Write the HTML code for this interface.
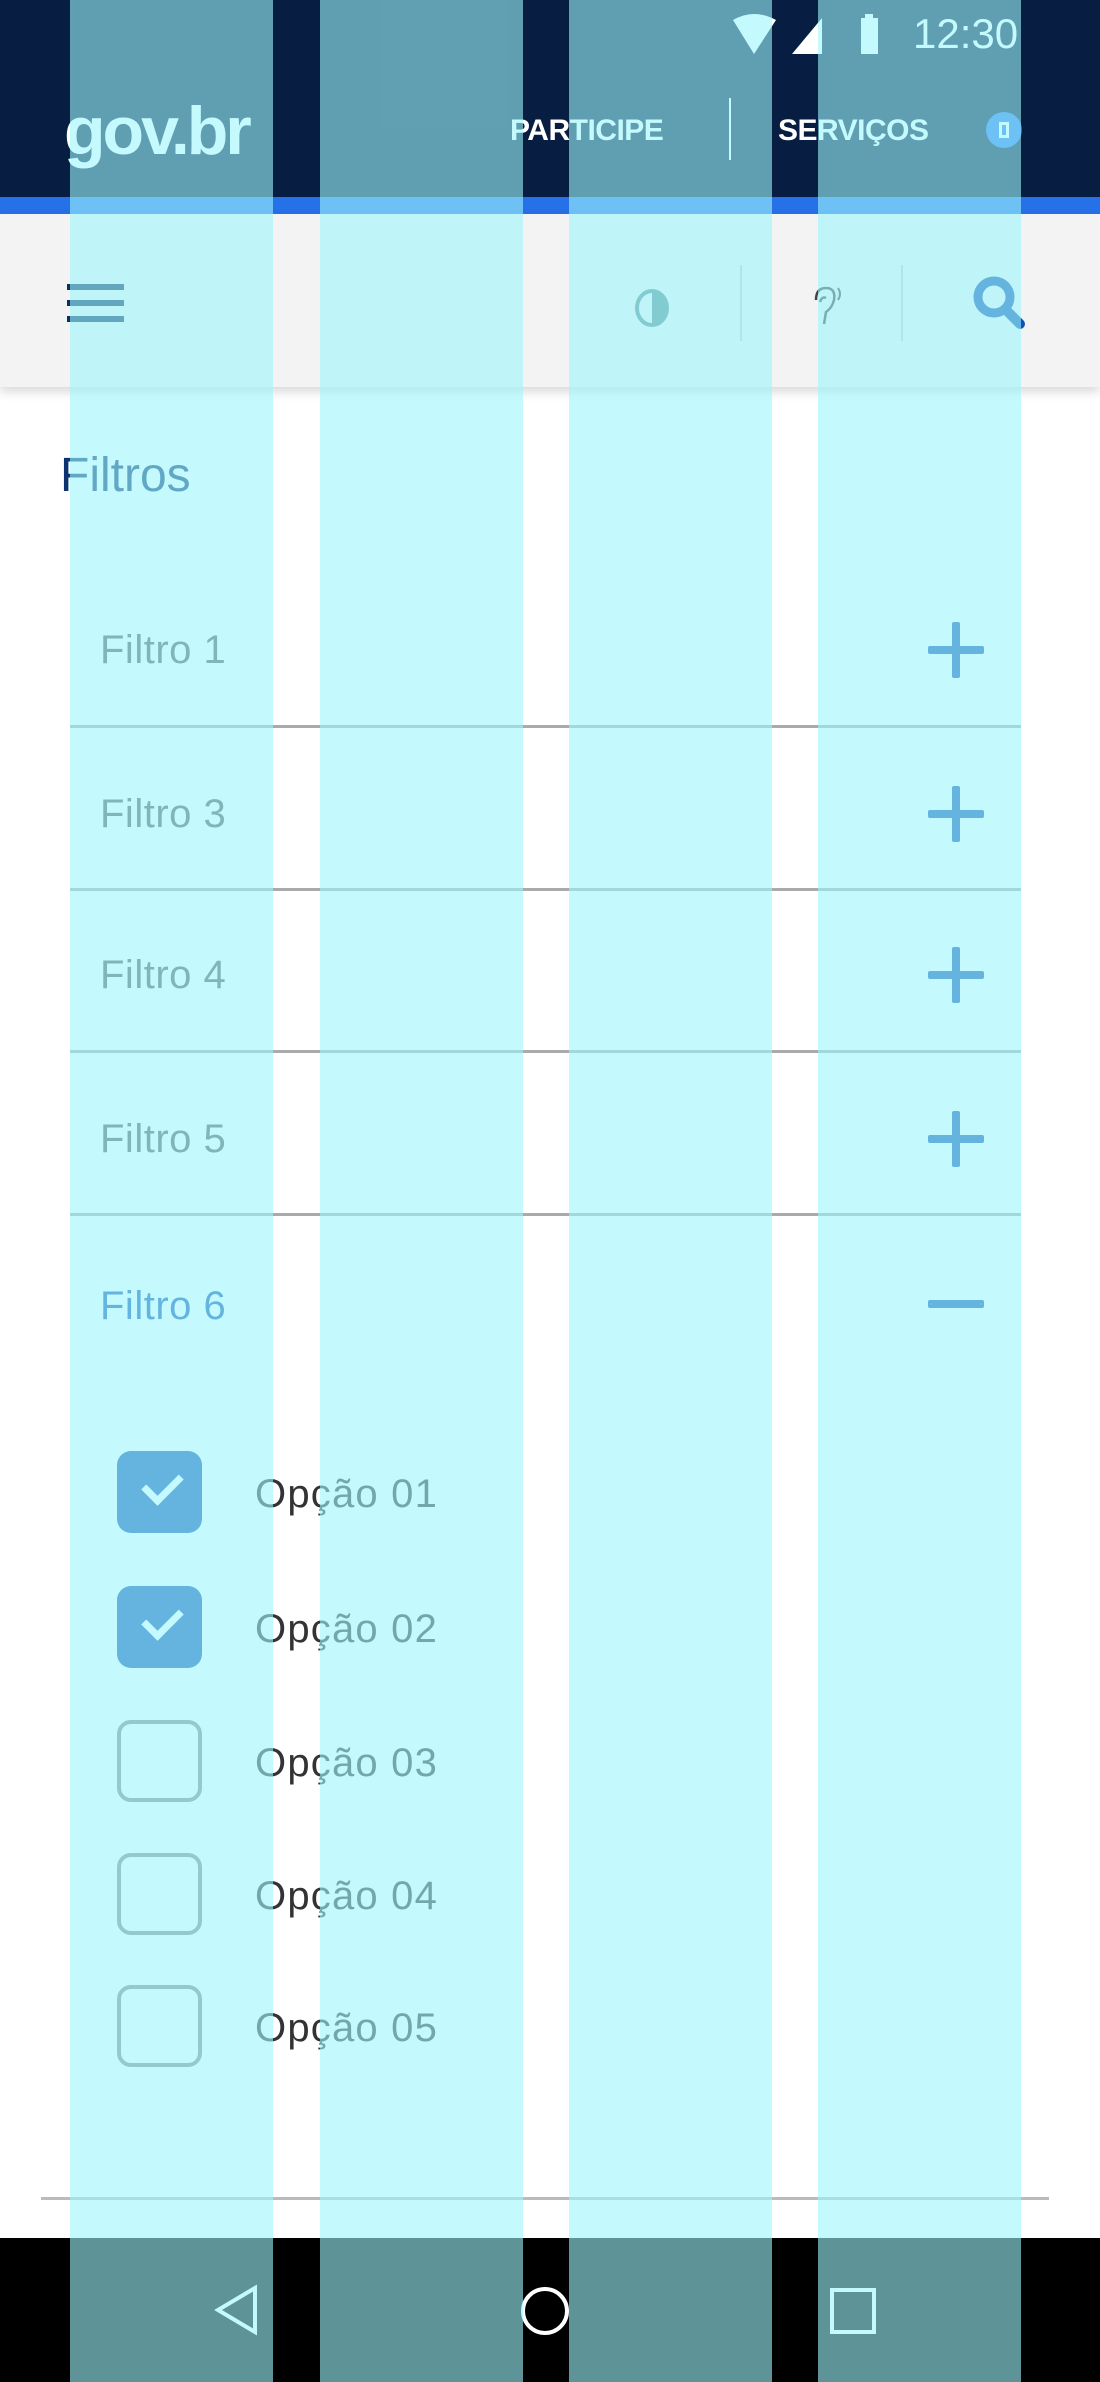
<!DOCTYPE html>
<html><head><meta charset="utf-8"><style>
*{margin:0;padding:0;box-sizing:border-box}
body{width:1100px;height:2382px;position:relative;overflow:hidden;background:#fff;font-family:"Liberation Sans",sans-serif}
.abs{position:absolute}
.col{position:absolute;top:0;height:2382px;width:203px;background:rgba(157,246,254,0.6);z-index:50}
.lbl{position:absolute;left:100px;font-size:40px;color:#555;line-height:1;letter-spacing:0.5px}
.div{position:absolute;left:70px;width:951px;height:3px;background:#aaa}
.plus{position:absolute;left:928px;width:56px;height:56px}
.plus:before{content:"";position:absolute;left:0;top:24px;width:56px;height:8px;background:#1351b4;border-radius:2px}
.plus:after{content:"";position:absolute;left:24px;top:0;width:8px;height:56px;background:#1351b4;border-radius:2px}
.cb{position:absolute;left:117px;width:85px;height:82px;border-radius:14px}
.cb.on{background:#1351b4}
.cb.off{border:4px solid #888}
.cb.on:after{content:"";position:absolute;left:27px;top:22px;width:30px;height:16px;border-left:7px solid #fff;border-bottom:7px solid #fff;transform:rotate(-45deg)}
.opt{position:absolute;left:255px;font-size:40px;color:#333;line-height:1;letter-spacing:1.2px}
</style></head><body>
<div class="col" style="left:70px"></div>
<div class="col" style="left:320px"></div>
<div class="col" style="left:569px"></div>
<div class="col" style="left:818px"></div>

<div class="abs" style="left:0;top:0;width:1100px;height:197px;background:#071d41"></div>
<div class="abs" style="left:0;top:197px;width:1100px;height:17px;background:#2670e8"></div>
<svg class="abs" style="left:730px;top:12px" width="300" height="45">
<path d="M3 8 Q24 -4 46 8 L24 42 Z" fill="#fff"/>
<path d="M62 42 L92 6 L92 42 Z" fill="#fff"/>
<rect x="135" y="2" width="8" height="4" fill="#fff"/>
<rect x="131" y="6" width="17" height="36" fill="#fff"/>
</svg>
<div class="abs" style="left:913px;top:10px;color:#fff;font-size:42px">12:30</div>
<div class="abs" style="left:64px;top:92px;color:#fff;font-size:68px;font-weight:bold;letter-spacing:-3px">gov.br</div>
<div class="abs" style="left:510px;top:114px;color:#fff;font-size:30px;font-weight:bold;letter-spacing:-0.5px">PARTICIPE</div>
<div class="abs" style="left:729px;top:98px;width:2px;height:62px;background:#fff"></div>
<div class="abs" style="left:778px;top:114px;color:#fff;font-size:30px;font-weight:bold;letter-spacing:-0.5px">SERVIÇOS</div>
<div class="abs" style="left:986px;top:112px;width:36px;height:36px;border-radius:50%;background:#2670e8"><div style="margin:10px 13px;width:10px;height:16px;border:3px solid #fff"></div></div>

<div class="abs" style="left:0;top:214px;width:1100px;height:173px;background:#f3f3f3;box-shadow:0 5px 10px rgba(0,0,0,.15)"></div>
<div class="abs" style="left:67px;top:284px;width:57px;height:6px;background:#0a3060"></div>
<div class="abs" style="left:67px;top:300px;width:57px;height:6px;background:#0a3060"></div>
<div class="abs" style="left:67px;top:316px;width:57px;height:6px;background:#0a3060"></div>
<svg class="abs" style="left:634px;top:288px" width="36" height="40"><ellipse cx="18" cy="20" rx="15" ry="17" fill="none" stroke="#5a8c90" stroke-width="4"/><path d="M18 3 A15 17 0 0 1 18 37 Z" fill="#5a8c90"/></svg>
<div class="abs" style="left:740px;top:265px;width:2px;height:76px;background:#ccc"></div>
<svg class="abs" style="left:806px;top:284px" width="40" height="44"><path d="M10 16 Q10 4 20 4 Q30 4 28 16 Q26 24 20 28 L18 40 M14 18 Q16 12 20 14" fill="none" stroke="#444" stroke-width="2.5"/><path d="M32 4 Q36 10 32 16" fill="none" stroke="#444" stroke-width="2"/></svg>
<div class="abs" style="left:901px;top:265px;width:2px;height:76px;background:#ccc"></div>
<svg class="abs" style="left:970px;top:272px" width="60" height="62"><circle cx="24" cy="25" r="16" fill="none" stroke="#1351b4" stroke-width="9"/><path d="M36 38 L50 52" stroke="#1351b4" stroke-width="10" stroke-linecap="round"/></svg>

<div class="abs" style="left:60px;top:448px;font-size:48px;color:#0c326f">Filtros</div>

<div class="lbl" style="top:630px">Filtro 1</div><div class="plus" style="top:622px"></div>
<div class="div" style="top:725px"></div>
<div class="lbl" style="top:794px">Filtro 3</div><div class="plus" style="top:786px"></div>
<div class="div" style="top:888px"></div>
<div class="lbl" style="top:955px">Filtro 4</div><div class="plus" style="top:947px"></div>
<div class="div" style="top:1050px"></div>
<div class="lbl" style="top:1119px">Filtro 5</div><div class="plus" style="top:1111px"></div>
<div class="div" style="top:1213px"></div>
<div class="lbl" style="top:1286px;color:#1351b4">Filtro 6</div>
<div class="abs" style="left:928px;top:1300px;width:56px;height:8px;background:#1351b4;border-radius:2px"></div>

<div class="cb on" style="top:1451px"></div><div class="opt" style="top:1474px">Opção 01</div>
<div class="cb on" style="top:1586px"></div><div class="opt" style="top:1609px">Opção 02</div>
<div class="cb off" style="top:1720px"></div><div class="opt" style="top:1743px">Opção 03</div>
<div class="cb off" style="top:1853px"></div><div class="opt" style="top:1876px">Opção 04</div>
<div class="cb off" style="top:1985px"></div><div class="opt" style="top:2008px">Opção 05</div>

<div class="abs" style="left:41px;top:2197px;width:1008px;height:3px;background:#bbb"></div>

<div class="abs" style="left:0;top:2238px;width:1100px;height:144px;background:#000"></div>
<svg class="abs" style="left:0;top:2238px" width="1100" height="144">
<path d="M255 50 L218 72 L255 94 Z" fill="none" stroke="#fff" stroke-width="4"/>
<circle cx="545" cy="73" r="22" fill="none" stroke="#fff" stroke-width="4"/>
<rect x="832" y="52" width="42" height="42" fill="none" stroke="#fff" stroke-width="4"/>
</svg>
</body></html>
